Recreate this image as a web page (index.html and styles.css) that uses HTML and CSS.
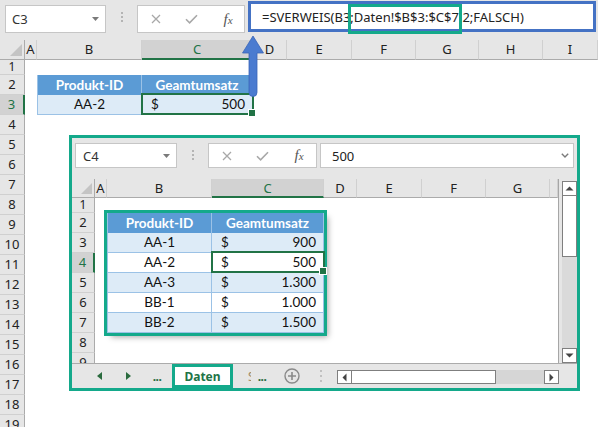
FILE: index.html
```html
<!DOCTYPE html>
<html lang="de">
<head>
<meta charset="utf-8">
<title>SVERWEIS Beispiel</title>
<link rel="stylesheet" href="styles.css">
</head>
<body>
<div class="fbar top-bar">
  <div class="namebox"><span>C3</span><svg class="dd" width="7" height="4" viewBox="0 0 7 4"><path d="M0 0H7L3.5 4Z" fill="#7a7a7a"/></svg></div>
  <div class="vdots"><i></i><i></i><i></i></div>
  <div class="fnbox">
    <span class="slot s1"><svg width="10" height="10" viewBox="0 0 10 10"><path d="M1 1L9 9M9 1L1 9" stroke="#a8a8a8" stroke-width="1.3"/></svg></span>
    <span class="slot s2"><svg width="13" height="10" viewBox="0 0 13 10"><path d="M1 5.2L4.6 8.8L12 1.2" stroke="#a8a8a8" stroke-width="1.6" fill="none"/></svg></span>
    <span class="slot s3"><span class="fx">f<span class="fxx">x</span></span></span>
  </div>
  <div class="formula">=SVERWEIS(B3;Daten!$B$3:$C$7;2;FALSCH)</div>
</div>

<div class="sheet top-sheet">
  <div class="corner"><span class="tri"></span></div>
  <div class="ch">A</div><div class="ch">B</div><div class="ch sel">C</div><div class="ch">D</div><div class="ch">E</div><div class="ch">F</div><div class="ch">G</div><div class="ch">H</div><div class="ch">I</div>
  <div class="rh r1">1</div>
  <div class="rh">2</div>
  <div class="rh sel">3</div>
  <div class="rh">4</div>
  <div class="rh">5</div>
  <div class="rh">6</div>
  <div class="rh">7</div>
  <div class="rh">8</div>
  <div class="rh">9</div>
  <div class="rh">10</div>
  <div class="rh">11</div>
  <div class="rh">12</div>
  <div class="rh">13</div>
  <div class="rh">14</div>
  <div class="rh">15</div>
  <div class="rh">16</div>
  <div class="rh">17</div>
  <div class="rh">18</div>
  <div class="rh">19</div>
  <div class="tbl top-tbl">
    <div class="th">Produkt-ID</div><div class="th">Geamtumsatz</div>
    <div class="td id">AA-2</div><div class="td val active"><span>$</span><span>500</span></div>
  </div>
</div>

<div class="hl-formula"></div>
<svg class="arrow" width="22" height="63" viewBox="0 0 22 63"><path d="M11 1L21.5 18H15V57.5Q15 61.5 11 61.5Q7 61.5 7 57.5V18H0.5Z" fill="#4a7bd0" stroke="#3b66b8" stroke-width="0.8"/></svg>

<div class="win">
  <div class="fbar win-bar">
    <div class="namebox"><span>C4</span><svg class="dd" width="7" height="4" viewBox="0 0 7 4"><path d="M0 0H7L3.5 4Z" fill="#7a7a7a"/></svg></div>
    <div class="vdots"><i></i><i></i><i></i></div>
    <div class="fnbox">
      <span class="slot s1"><svg width="10" height="10" viewBox="0 0 10 10"><path d="M1 1L9 9M9 1L1 9" stroke="#a8a8a8" stroke-width="1.3"/></svg></span>
      <span class="slot s2"><svg width="13" height="10" viewBox="0 0 13 10"><path d="M1 5.2L4.6 8.8L12 1.2" stroke="#a8a8a8" stroke-width="1.6" fill="none"/></svg></span>
      <span class="slot s3"><span class="fx">f<span class="fxx">x</span></span></span>
    </div>
    <div class="formula"><span>500</span><svg class="chev" width="8" height="5" viewBox="0 0 8 5"><path d="M0.8 0.8L4 4L7.2 0.8" stroke="#7a7a7a" stroke-width="1.4" fill="none"/></svg></div>
  </div>
  <div class="wbody">
    <div class="sheet win-sheet">
      <div class="corner"><span class="tri"></span></div>
      <div class="ch">A</div><div class="ch">B</div><div class="ch sel">C</div><div class="ch">D</div><div class="ch">E</div><div class="ch">F</div><div class="ch">G</div><div class="ch"></div>
      <div class="rh r1">1</div>
      <div class="rh">2</div>
      <div class="rh">3</div>
      <div class="rh sel">4</div>
      <div class="rh">5</div>
      <div class="rh">6</div>
      <div class="rh">7</div>
      <div class="rh">8</div>
      <div class="rh">9</div>
      <div class="tbl win-tbl">
        <div class="th">Produkt-ID</div><div class="th">Geamtumsatz</div>
        <div class="td id">AA-1</div><div class="td val"><span>$</span><span>900</span></div>
        <div class="td id w">AA-2</div><div class="td val w active"><span>$</span><span>500</span></div>
        <div class="td id">AA-3</div><div class="td val"><span>$</span><span>1.300</span></div>
        <div class="td id w">BB-1</div><div class="td val w"><span>$</span><span>1.000</span></div>
        <div class="td id">BB-2</div><div class="td val"><span>$</span><span>1.500</span></div>
      </div>
    </div>
    <div class="vscroll">
      <div class="sbtn"><svg width="9" height="5" viewBox="0 0 9 5"><path d="M0.5 4.5H8.5L4.5 0.5Z" fill="#444"/></svg></div>
      <div class="vthumb"></div>
      <div class="vtrack"></div>
      <div class="sbtn"><svg width="9" height="5" viewBox="0 0 9 5"><path d="M0.5 0.5H8.5L4.5 4.5Z" fill="#444"/></svg></div>
    </div>
  </div>
  <div class="tabbar">
    <div class="tb tb-prev"><svg width="5" height="8" viewBox="0 0 5 8"><path d="M5 0V8L0 4Z" fill="#2a6b3e"/></svg></div>
    <div class="tb tb-next"><svg width="5" height="8" viewBox="0 0 5 8"><path d="M0 0V8L5 4Z" fill="#2a6b3e"/></svg></div>
    <div class="tb tb-more">...</div>
    <div class="tb tb-sep"></div>
    <div class="tab">Daten</div>
    <div class="tb tb-clip"><span>S</span></div>
    <div class="tb tb-more2">...</div>
    <div class="tb tb-add"><svg width="16" height="16" viewBox="0 0 16 16"><circle cx="8" cy="8" r="7" stroke="#8a8a8a" stroke-width="1.4" fill="none"/><path d="M8 4V12M4 8H12" stroke="#8a8a8a" stroke-width="1.6"/></svg></div>
    <div class="tb tb-dots"><i></i><i></i><i></i></div>
    <div class="hscroll">
      <div class="sbtn h"><svg width="5" height="9" viewBox="0 0 5 9"><path d="M4.5 0.5V8.5L0.5 4.5Z" fill="#444"/></svg></div>
      <div class="hthumb"></div>
      <div class="htrack"></div>
      <div class="sbtn h"><svg width="5" height="9" viewBox="0 0 5 9"><path d="M0.5 0.5V8.5L4.5 4.5Z" fill="#444"/></svg></div>
    </div>
  </div>
</div>
</body>
</html>
```

FILE: styles.css
```css
* { box-sizing: border-box; }
html, body { margin: 0; padding: 0; }
body {
  width: 598px;
  height: 427px;
  overflow: hidden;
  position: relative;
  background: #fff;
  font-family: "Noto Sans", "DejaVu Sans", sans-serif;
  color: #222;
}

/* ---------- formula bar ---------- */
.fbar {
  display: flex;
  align-items: flex-start;
  background: #e6e6e6;
  flex: none;
}
.top-bar { height: 40px; }
.win-bar { height: 41px; }

.namebox {
  display: flex;
  align-items: center;
  background: #fff;
  border: 1px solid #c6c6c6;
  font-size: 13px;
  color: #333;
  white-space: nowrap;
}
.top-bar .namebox { margin: 5px 0 0 5px; width: 101px; height: 28px; padding-left: 6px; }
.win-bar .namebox { margin: 5px 0 0 3px; width: 102px; height: 25px; padding-left: 7px; }
.namebox .dd { margin-left: auto; margin-right: 6px; }

.vdots {
  width: 31px;
  display: flex;
  flex-direction: column;
  align-items: center;
  gap: 2px;
  padding-top: 12px;
}
.vdots i { display: block; width: 2px; height: 2px; background: #b4b4b4; }

.fnbox {
  display: flex;
  align-items: center;
  background: #fff;
  border: 1px solid #c6c6c6;
  padding-left: 7px;
  margin-top: 5px;
}
.top-bar .fnbox { width: 108px; height: 28px; }
.win-bar .fnbox { width: 109px; height: 25px; }
.slot { display: flex; justify-content: center; align-items: center; }
.s1 { width: 22px; }
.s2 { width: 48px; }
.s3 { width: 26px; }
.fx {
  font-family: "Liberation Serif", serif;
  font-style: italic;
  font-size: 15px;
  color: #555;
  line-height: 1;
}
.fxx { font-size: 11px; }

.formula {
  background: #fff;
  white-space: nowrap;
  font-size: 13px;
  color: #222;
  display: flex;
  align-items: center;
}
.top-bar .formula {
  margin: 1px 0 0 3px;
  width: 348px;
  height: 31px;
  border: 3px solid #4472c4;
  padding-left: 11px;
}
.win-bar .formula {
  margin: 5px 0 0 3px;
  width: 254px;
  height: 25px;
  border: 1px solid #c6c6c6;
  padding-left: 11px;
}
.formula .chev { margin-left: auto; margin-right: 4px; }

/* ---------- sheet grid ---------- */
.sheet {
  display: grid;
  background: #fff;
}
.top-sheet {
  grid-template-columns: 25px 12px 105px 111px 34px 65px 64px 63px 64px 1fr;
  grid-template-rows: 20px 15px repeat(18, 20px);
}
.win-sheet {
  flex: 1;
  height: 184px;
  overflow: hidden;
  grid-template-columns: 23px 12px 105px 112px 33px 65px 64px 64px 1fr;
  grid-template-rows: 19px 15px repeat(8, 20px);
}

.corner {
  background: #e6e6e6;
  border-right: 1px solid #ababab;
  border-bottom: 1px solid #ababab;
  display: flex;
  align-items: flex-end;
  justify-content: flex-end;
  padding: 0 2px 3px 0;
}
.corner .tri {
  width: 0;
  height: 0;
  border-left: 12px solid transparent;
  border-bottom: 12px solid #c4c4c4;
}
.win-sheet .corner .tri { border-left-width: 11px; border-bottom-width: 11px; }

.ch {
  background: #e6e6e6;
  border-right: 1px solid #d0d0d0;
  border-bottom: 1px solid #ababab;
  font-size: 13px;
  text-align: center;
  line-height: 19px;
  color: #222;
  white-space: nowrap;
  overflow: hidden;
}
.win-sheet .ch { line-height: 18px; }
.ch.sel {
  background: #d2d2d2;
  border-bottom: 2px solid #217346;
  color: #217346;
}

.rh {
  grid-column: 1;
  background: #e6e6e6;
  border-right: 1px solid #ababab;
  border-bottom: 1px solid #d0d0d0;
  font-size: 13px;
  text-align: center;
  line-height: 19px;
  color: #222;
}
.rh.r1 { line-height: 14px; font-size: 12px; }
.rh.sel {
  background: #d2d2d2;
  border-right: 2px solid #217346;
  color: #217346;
}

/* ---------- tables ---------- */
.tbl {
  display: grid;
  grid-template-columns: 104px 1fr;
  grid-auto-rows: 20px;
  font-family: Lato, "Noto Sans", sans-serif;
  font-size: 13.5px;
  border-left: 1px solid #9bc2e6;
  white-space: nowrap;
}
.top-tbl { grid-column: 3 / 5; grid-row: 3 / 5; }
.win-tbl {
  grid-column: 3 / 5;
  grid-row: 3 / 9;
  outline: 3px solid #14a98b;
  box-shadow: 4px 4px 6px rgba(0, 0, 0, 0.35);
}
.th {
  background: #5b9bd5;
  color: #fff;
  font-weight: 700;
  text-align: center;
  line-height: 20px;
  border-right: 1px solid #9bc2e6;
}
.td {
  background: #ddebf7;
  color: #111;
  line-height: 19px;
  border-right: 1px solid #9bc2e6;
  border-bottom: 1px solid #9bc2e6;
}
.td.w { background: #fff; }
.td.id { text-align: center; }
.td.val {
  display: flex;
  justify-content: space-between;
  padding: 0 7px 0 9px;
}
.active { position: relative; }
.active::after {
  content: "";
  position: absolute;
  left: -1px;
  top: -2px;
  right: -2px;
  bottom: -1px;
  border: 2px solid #217346;
}
.active::before {
  content: "";
  position: absolute;
  right: -4px;
  bottom: -3px;
  width: 6px;
  height: 6px;
  background: #217346;
  border: 1px solid #fff;
  z-index: 2;
}

/* ---------- annotations ---------- */
.hl-formula {
  position: absolute;
  left: 348px;
  top: 4px;
  width: 114px;
  height: 30px;
  border: 3px solid #14a98b;
}
.arrow {
  position: absolute;
  left: 242px;
  top: 35px;
}

/* ---------- embedded window ---------- */
.win {
  position: absolute;
  left: 69px;
  top: 135px;
  width: 511px;
  height: 256px;
  border: 3px solid #14a98b;
  background: #e6e6e6;
  display: flex;
  flex-direction: column;
}
.wbody {
  display: flex;
  height: 184px;
  flex: none;
}
.vscroll {
  width: 19px;
  flex: none;
  border-left: 1px solid #a6a6a6;
  background: #e6e6e6;
  padding: 2px 0 0 3px;
  display: flex;
  flex-direction: column;
}
.sbtn {
  width: 15px;
  height: 15px;
  flex: none;
  background: #fff;
  border: 1px solid #7f7f7f;
  display: flex;
  align-items: center;
  justify-content: center;
}
.vthumb {
  height: 61px;
  flex: none;
  background: #fff;
  border: 1px solid #7f7f7f;
  border-top: 0;
}
.vtrack { flex: 1; background: #dadada; }

.tabbar {
  height: 25px;
  flex: none;
  border-top: 1px solid #ababab;
  display: flex;
  align-items: stretch;
  background: #e6e6e6;
}
.tb {
  display: flex;
  align-items: center;
  justify-content: center;
  flex: none;
}
.tb-prev { margin-left: 14px; width: 26px; }
.tb-next { width: 32px; }
.tb-more, .tb-more2 {
  font-size: 12px;
  font-weight: 700;
  color: #2a6b3e;
  letter-spacing: -0.5px;
}
.tb-more { width: 26px; }
.tb-sep { width: 2px; }
.tab {
  width: 61px;
  flex: none;
  background: #fff;
  border: 3px solid #14a98b;
  font-size: 12px;
  font-weight: 700;
  color: #217346;
  display: flex;
  align-items: center;
  justify-content: center;
}
.tb-clip { width: 19px; justify-content: flex-start; padding-left: 15px; }
.tb-clip span {
  display: block;
  width: 3px;
  overflow: hidden;
  font-size: 12px;
  color: #a08a66;
}
.tb-more2 { width: 20px; }
.tb-add { width: 40px; }
.tb-dots {
  width: 18px;
  flex-direction: column;
  gap: 3px;
}
.tb-dots i { display: block; width: 2px; height: 2px; background: #c0c0c0; }

.hscroll {
  margin: 6px 0 0 7px;
  width: 222px;
  height: 14px;
  display: flex;
  flex: none;
}
.sbtn.h { width: 15px; height: 14px; }
.hthumb {
  width: 144px;
  background: #fff;
  border: 1px solid #7f7f7f;
  border-left: 0;
}
.htrack { flex: 1; background: #d6d6d6; }
```
